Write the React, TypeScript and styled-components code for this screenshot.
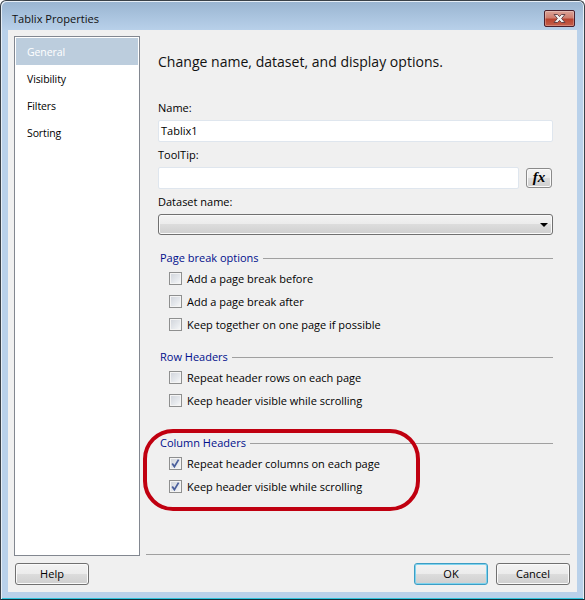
import React from "react";
import styled, { createGlobalStyle } from "styled-components";

const Global = createGlobalStyle`
  html, body { margin: 0; padding: 0; background: #fff; }
  * { box-sizing: border-box; }
`;

const Win = styled.div`
  position: relative;
  width: 585px;
  height: 600px;
  display: flex;
  flex-direction: column;
  font-family: "Open Sans", "Noto Sans", sans-serif;
  font-size: 11px;
  color: #000;
  background: linear-gradient(180deg, #99b4d0 0px, #a9c3de 15px, #b9d1ea 30px, #b9d1ea 100%);
  border: 1px solid #3a4148;
  border-radius: 6px 6px 0 0;
  border-bottom: 1px solid #14303c;
  box-shadow: inset 1px 1px 0 #e6eef6, inset -1px 0 0 #e6eef6, inset 0 -1px 0 #2fc4dc;
`;

const TitleBar = styled.div`
  height: 29px;
  flex: none;
  display: flex;
  align-items: flex-start;
  justify-content: space-between;
  padding: 9px 9px 0 11px;
`;

const Title = styled.div`
  font-size: 11.1px;
  line-height: 18px;
  color: #111;
`;

const CloseBtn = styled.div`
  width: 31px;
  height: 17px;
  border: 1px solid #4a1f2c;
  border-radius: 2px;
  background: linear-gradient(180deg, #dba397 0, #cf7f70 45%, #b8432f 55%, #c5604c 100%);
  box-shadow: inset 0 0 0 1px rgba(255, 255, 255, 0.25);
  display: flex;
  align-items: center;
  justify-content: center;
`;

const Client = styled.div`
  margin: 0 7px;
  height: 562px;
  flex: none;
  background: #f0f0f0;
  display: flex;
  flex-direction: column;
  padding: 6px 7px 7px 7px;
`;

const Main = styled.div`
  display: flex;
  height: 520px;
  flex: none;
  margin-left: -1px;
`;

const Sidebar = styled.div`
  width: 126px;
  flex: none;
  background: #fff;
  border: 1px solid #828790;
  padding: 1px;
`;

const NavItem = styled.div<{ $active?: boolean }>`
  height: 27px;
  padding: 2px 0 0 11px;
  line-height: 25px;
  font-size: 10.5px;
  letter-spacing: -0.1px;
  background: ${(p) => (p.$active ? "#bccddd" : "transparent")};
  color: ${(p) => (p.$active ? "#fff" : "#000")};
`;

const Panel = styled.div`
  flex: 1;
  min-width: 0;
  padding: 0 17px 0 18px;
  display: flex;
  flex-direction: column;
`;

const Heading = styled.div`
  font-size: 14.05px;
  line-height: 20px;
  margin-top: 16px;
  color: #111;
`;

const FieldLabel = styled.div<{ $top: number }>`
  font-size: 11px;
  line-height: 16px;
  margin-top: ${(p) => p.$top}px;
`;

const Row = styled.div`
  display: flex;
  align-items: center;
  gap: 7px;
  margin-top: 4px;
`;

const TextBox = styled.div<{ $w: number }>`
  width: ${(p) => p.$w}px;
  height: 22px;
  flex: none;
  background: #fff;
  border: 1px solid #dfe6ee;
  border-radius: 2px;
  padding-left: 2px;
  font-size: 11px;
  line-height: 20px;
`;

const FxBtn = styled.div`
  width: 26px;
  height: 20px;
  flex: none;
  border: 1px solid #8a8a8a;
  border-radius: 3px;
  background: linear-gradient(180deg, #f3f3f3 0, #ebebeb 50%, #dcdcdc 50%, #cfcfcf 100%);
  box-shadow: inset 0 0 0 1px #fafafa;
  font-family: "Liberation Serif", serif;
  font-style: italic;
  font-weight: bold;
  font-size: 15px;
  line-height: 16px;
  text-align: center;
`;

const Select = styled.div`
  width: 395px;
  height: 21px;
  margin-top: 4px;
  border: 1px solid #707070;
  border-radius: 3px;
  background: linear-gradient(180deg, #f3f3f3 0, #ebebeb 50%, #dcdcdc 50%, #cfcfcf 100%);
  box-shadow: inset 0 0 0 1px #fafafa;
  display: flex;
  align-items: center;
  justify-content: flex-end;
  padding-right: 4px;
`;

const Arrow = styled.div`
  width: 0;
  height: 0;
  border-left: 4px solid transparent;
  border-right: 4px solid transparent;
  border-top: 4px solid #000;
`;

const Group = styled.div<{ $top: number }>`
  margin-top: ${(p) => p.$top}px;
  display: flex;
  align-items: center;
  gap: 4px;
  padding-left: 2px;
  font-size: 11px;
  line-height: 16px;
  color: #000f8c;
  &::after {
    content: "";
    flex: 1;
    height: 1px;
    background: #a0a0a0;
  }
`;

const CheckRows = styled.div`
  display: flex;
  flex-direction: column;
  gap: 7px;
  margin-top: 4px;
  padding-left: 11px;
`;

const CheckRow = styled.div`
  display: flex;
  align-items: center;
  gap: 5px;
  height: 16px;
  font-size: 11px;
`;

const Box = styled.div`
  width: 13px;
  height: 13px;
  flex: none;
  border: 1px solid #8e8f8f;
  background: linear-gradient(135deg, #cfd3da 0, #e6e9ed 60%, #fafafa 100%);
  box-shadow: inset 0 0 0 1px #f4f4f4;
  display: flex;
  align-items: center;
  justify-content: center;
`;

const Footer = styled.div`
  display: flex;
  flex-direction: column;
`;

const FooterLine = styled.div`
  height: 1px;
  margin-left: 131px;
  margin-top: -2px;
  background: #a0a0a0;
`;

const Buttons = styled.div`
  display: flex;
  gap: 8px;
  margin-top: 8px;
`;

const Btn = styled.div<{ $primary?: boolean; $push?: boolean }>`
  width: 74px;
  height: 22px;
  border: 1px solid ${(p) => (p.$primary ? "#3c9dc4" : "#707070")};
  border-radius: 3px;
  background: linear-gradient(180deg, #f3f3f3 0, #ebebeb 50%, #dcdcdc 50%, #cfcfcf 100%);
  box-shadow: inset 0 0 0 1px ${(p) => (p.$primary ? "#7fd3ee" : "#fafafa")};
  text-align: center;
  font-size: 11px;
  line-height: 20px;
  margin-left: ${(p) => (p.$push ? "auto" : "0")};
`;

const Annotation = styled.div`
  position: absolute;
  left: 142px;
  top: 428px;
  width: 277px;
  height: 82px;
  border: 4px solid #c00010;
  border-radius: 30px;
  pointer-events: none;
`;

const Check = () => (
  <svg width="11" height="11" viewBox="0 0 11 11">
    <path d="M2.2 5.4 L4.4 8.6 L8.6 1.6" fill="none" stroke="#4a5f9c" strokeWidth="1.8" />
  </svg>
);

const CloseGlyph = () => (
  <svg width="15" height="11" viewBox="0 0 15 11">
    <path d="M2 1.5 H5.5 L7.5 3.6 L9.5 1.5 H13 L9.6 5.5 L13 9.5 H9.5 L7.5 7.4 L5.5 9.5 H2 L5.4 5.5 Z" fill="#f2f2f2" stroke="#5a3a40" strokeWidth="0.9" />
  </svg>
);

const Option = ({ label, checked }: { label: string; checked?: boolean }) => (
  <CheckRow>
    <Box>{checked && <Check />}</Box>
    {label}
  </CheckRow>
);

export default function App() {
  return (
    <Win>
      <Global />
      <TitleBar>
        <Title>Tablix Properties</Title>
        <CloseBtn><CloseGlyph /></CloseBtn>
      </TitleBar>
      <Client>
        <Main>
          <Sidebar>
            <NavItem $active>General</NavItem>
            <NavItem>Visibility</NavItem>
            <NavItem>Filters</NavItem>
            <NavItem>Sorting</NavItem>
          </Sidebar>
          <Panel>
            <Heading>Change name, dataset, and display options.</Heading>
            <FieldLabel $top={28}>Name:</FieldLabel>
            <Row><TextBox $w={395}>Tablix1</TextBox></Row>
            <FieldLabel $top={5}>ToolTip:</FieldLabel>
            <Row><TextBox $w={361} /><FxBtn>fx</FxBtn></Row>
            <FieldLabel $top={5}>Dataset name:</FieldLabel>
            <Select><Arrow /></Select>
            <Group $top={15}>Page break options</Group>
            <CheckRows>
              <Option label="Add a page break before" />
              <Option label="Add a page break after" />
              <Option label="Keep together on one page if possible" />
            </CheckRows>
            <Group $top={17}>Row Headers</Group>
            <CheckRows>
              <Option label="Repeat header rows on each page" />
              <Option label="Keep header visible while scrolling" />
            </CheckRows>
            <Group $top={27}>Column Headers</Group>
            <CheckRows>
              <Option label="Repeat header columns on each page" checked />
              <Option label="Keep header visible while scrolling" checked />
            </CheckRows>
          </Panel>
        </Main>
        <Footer>
          <FooterLine />
          <Buttons>
            <Btn>Help</Btn>
            <Btn $primary $push>OK</Btn>
            <Btn>Cancel</Btn>
          </Buttons>
        </Footer>
      </Client>
      <Annotation />
    </Win>
  );
}
